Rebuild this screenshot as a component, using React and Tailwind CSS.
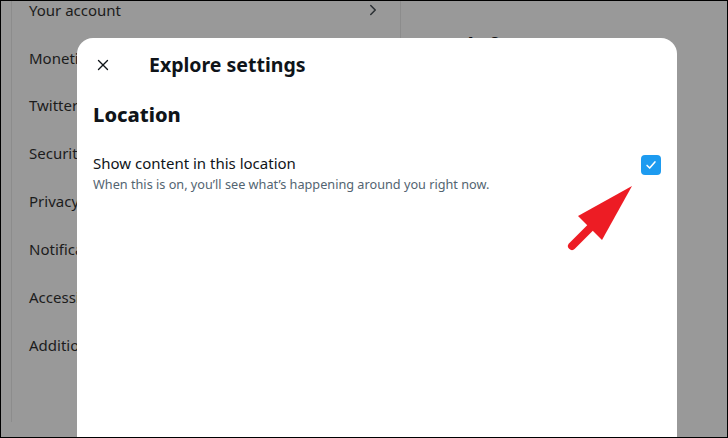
import { X, ChevronRight } from "lucide-react";

const MENU = [
  "Your account",
  "Monetization",
  "Twitter Blue",
  "Security and account access",
  "Privacy and safety",
  "Notifications",
  "Accessibility, display, and languages",
  "Additional resources",
];

export default function App() {
  return (
    <div
      className="relative w-[728px] h-[438px] overflow-hidden border border-black bg-[#999999]"
      style={{ fontFamily: '"Segoe UI", "Noto Sans", "Open Sans", sans-serif' }}
    >
      {/* page behind the overlay */}
      <div className="flex h-full pl-[10px]">
        <div className="w-[390px] h-full border-l border-r border-[#8c8c8c] flex flex-col -mt-[15px]">
          {MENU.map((item, i) => (
            <div
              key={item}
              className="h-[47.85px] shrink-0 flex items-center justify-between pl-[17px] pr-[18px] text-[15px] text-[#1c1c1c] whitespace-nowrap"
            >
              <span>{item}</span>
              {i === 0 && <ChevronRight className="w-[18px] h-[18px] text-[#2a2f33]" strokeWidth={2} />}
            </div>
          ))}
        </div>
        <div className="flex-1 pl-[16px] pt-[29px] text-[20px] font-bold text-[#111] whitespace-nowrap">Trends for you</div>
      </div>

      {/* modal */}
      <div className="absolute left-[76px] top-[37px] w-[600px] h-[420px] bg-white rounded-[16px]">
        <div className="flex items-center h-[53px] px-[16px]">
          <button className="w-[18px] h-[18px] flex items-center justify-center text-[#0f1419] ml-[1px]">
            <X className="w-[18px] h-[18px]" strokeWidth={1.8} />
          </button>
          <h1 className="ml-[37px] text-[19.5px] font-bold text-[#0f1419] leading-none">Explore settings</h1>
        </div>
        <div className="px-[16px] pt-[12px]">
          <h2 className="text-[20px] font-extrabold text-[#0f1419] leading-[24px]">Location</h2>
          <div className="flex items-start justify-between mt-[26px]">
            <div>
              <div className="text-[15px] text-[#0f1419] leading-[20px]">Show content in this location</div>
              <div className="text-[12.7px] text-[#536471] leading-[16px] mt-[3px]">
                When this is on, you’ll see what’s happening around you right now.
              </div>
            </div>
            <div className="mt-[2px] w-[20px] h-[20px] rounded-[4px] bg-[#1d9bf0] flex items-center justify-center">
              <svg viewBox="0 0 16 16" className="w-[14px] h-[14px]" fill="none" stroke="white" strokeWidth="1.8" strokeLinecap="round" strokeLinejoin="round">
                <path d="M3.5 8.5l3 3L12.5 4.5" />
              </svg>
            </div>
          </div>
        </div>
      </div>

      {/* annotation arrow */}
      <svg className="absolute left-0 top-0 pointer-events-none" width="728" height="438" viewBox="0 0 728 438">
        <line x1="571" y1="245" x2="592" y2="224" stroke="#ed1c24" strokeWidth="8" strokeLinecap="round" />
        <polygon points="631,185 577,215 601,239" fill="#ed1c24" />
      </svg>
    </div>
  );
}
